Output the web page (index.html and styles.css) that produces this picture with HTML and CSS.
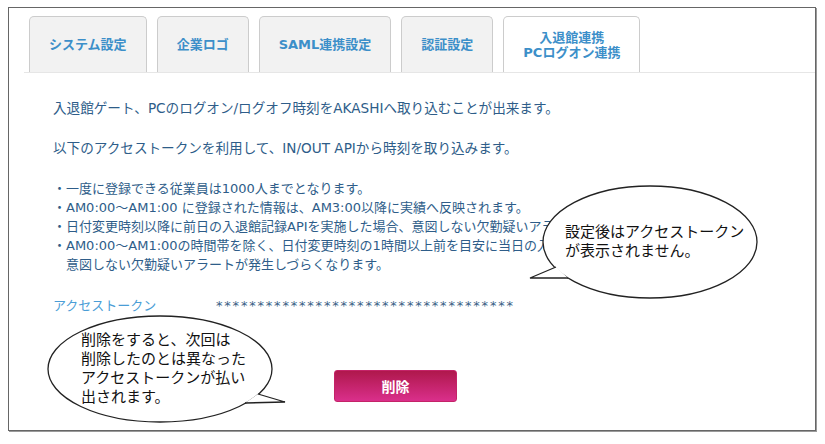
FILE: index.html
```html
<!DOCTYPE html>
<html lang="ja">
<head>
<meta charset="utf-8">
<title>入退館連携 PCログオン連携</title>
<link rel="stylesheet" href="styles.css">
</head>
<body>
<div class="frame">
  <div class="tabs">
    <div class="tab">システム設定</div>
    <div class="tab">企業ロゴ</div>
    <div class="tab">SAML連携設定</div>
    <div class="tab">認証設定</div>
    <div class="tab active">入退館連携<br>PCログオン連携</div>
  </div>
  <div class="content">
    <p class="para">入退館ゲート、PCのログオン/ログオフ時刻をAKASHIへ取り込むことが出来ます。</p>
    <p class="para">以下のアクセストークンを利用して、IN/OUT APIから時刻を取り込みます。</p>
    <ul class="notes">
      <li>・一度に登録できる従業員は1000人までとなります。</li>
      <li>・AM0:00～AM1:00 に登録された情報は、AM3:00以降に実績へ反映されます。</li>
      <li>・日付変更時刻以降に前日の入退館記録APIを実施した場合、意図しない欠勤疑いアラートが発生する場合があります。</li>
      <li>・AM0:00～AM1:00の時間帯を除く、日付変更時刻の1時間以上前を目安に当日の入退館記録APIを実施してください。<br><span class="indent">意図しない欠勤疑いアラートが発生しづらくなります。</span></li>
    </ul>
    <div class="token-row">
      <span class="token-label">アクセストークン</span>
      <span class="token-value">************************************</span>
    </div>
    <div class="actions">
      <button class="btn-delete" type="button">削除</button>
    </div>
  </div>
</div>
<svg class="callouts" width="825" height="444" viewBox="0 0 825 444" xmlns="http://www.w3.org/2000/svg">
  <g class="bubble">
    <ellipse cx="650" cy="242" rx="107" ry="56"/>
    <path d="M556,267 L530,278 L568,278"/>
    <text x="565" y="237">設定後はアクセストークン</text>
    <text x="565" y="256">が表示されません。</text>
  </g>
  <g class="bubble">
    <ellipse cx="160" cy="369" rx="112" ry="53"/>
    <path d="M258,394 L285,402 L245,403"/>
    <text x="81" y="345">削除をすると、次回は</text>
    <text x="81" y="364">削除したのとは異なった</text>
    <text x="81" y="383">アクセストークンが払い</text>
    <text x="81" y="402">出されます。</text>
  </g>
</svg>
</body>
</html>
```
FILE: styles.css
```css
html, body {
  margin: 0;
  padding: 0;
  background: #ffffff;
}
body {
  position: relative;
  width: 825px;
  height: 444px;
  overflow: hidden;
  font-family: "DejaVu Sans", "Noto Sans CJK JP", sans-serif;
  font-size: 13px;
}
.frame {
  box-sizing: border-box;
  margin: 7px 0 0 8px;
  width: 808px;
  height: 424px;
  border: 1px solid #666666;
  box-shadow: 1px 1px 0 #9a9a9a;
  background: #ffffff;
}
.tabs {
  display: flex;
  gap: 10px;
  margin-left: 15px;
  padding: 8px 0 0 5px;
  border-bottom: 1px solid #e6e6e6;
}
.tab {
  box-sizing: border-box;
  height: 56px;
  padding: 0 19px;
  display: flex;
  align-items: center;
  justify-content: center;
  text-align: center;
  font-weight: bold;
  font-size: 13px;
  line-height: 15px;
  color: #3c8fc9;
  background: #f2f2f2;
  border: 1px solid #cccccc;
  border-bottom: none;
  border-radius: 5px 5px 0 0;
}
.tab.active {
  background: #ffffff;
}
.content {
  padding: 26px 0 0 44px;
  color: #2e5d89;
  line-height: 19px;
}
.para {
  margin: 0 0 21px 0;
  font-size: 13.6px;
}
.notes {
  list-style: none;
  margin: 0;
  padding: 0;
}
.notes li {
  white-space: nowrap;
}
.indent {
  padding-left: 13px;
}
.token-row {
  display: flex;
  margin-top: 22px;
}
.token-label {
  width: 163px;
  color: #4a9dd6;
}
.token-value {
  letter-spacing: 1.8px;
  color: #3a5f86;
}
.actions {
  margin-top: 55px;
  padding-left: 281px;
}
.btn-delete {
  width: 123px;
  height: 32px;
  border: 1px solid #c42368;
  border-radius: 3px;
  background: linear-gradient(to bottom, #af184c, #da2f8b);
  color: #ffffff;
  font-family: "DejaVu Sans", "Noto Sans CJK JP", sans-serif;
  font-size: 14px;
  font-weight: bold;
  padding: 0;
}
.callouts {
  position: absolute;
  top: 0;
  left: 0;
  pointer-events: none;
}
.bubble ellipse,
.bubble path {
  fill: #ffffff;
  stroke: #222222;
  stroke-width: 1.3;
}
.bubble text {
  font-family: "Noto Sans CJK JP", sans-serif;
  font-size: 15px;
  fill: #111111;
}
```
